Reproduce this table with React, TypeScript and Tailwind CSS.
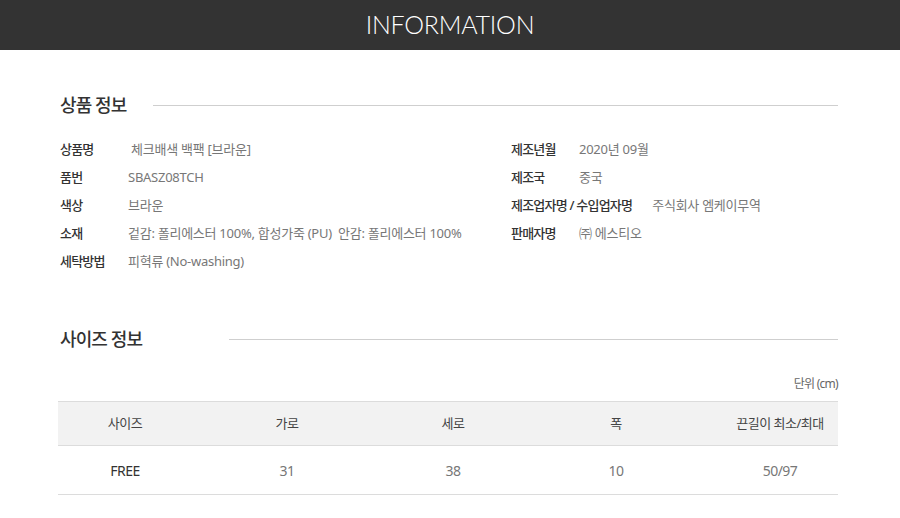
const font = { fontFamily: '"Noto Sans", "Noto Sans CJK KR", sans-serif' };

const productLeft = [
  { label: "상품명", value: " 체크배색 백팩 [브라운]" },
  { label: "품번", value: "SBASZ08TCH" },
  { label: "색상", value: "브라운" },
  { label: "소재", value: "겉감: 폴리에스터 100%, 합성가죽 (PU)  안감: 폴리에스터 100%" },
  { label: "세탁방법", value: "피혁류 (No-washing)" },
];

const productRight = [
  { label: "제조년월", value: "2020년 09월" },
  { label: "제조국", value: "중국" },
  { label: "제조업자명 / 수입업자명", value: "주식회사 엠케이무역" },
  { label: "판매자명", value: "㈜ 에스티오" },
];

const sizeHead = ["사이즈", "가로", "세로", "폭", "끈길이 최소/최대"];
const sizeRow = ["FREE", "31", "38", "10", "50/97"];
// nudges so each column's centre lands where the reference puts it
const colPad = ["pr-[22px]", "pr-[10px]", "pl-[10px]", "pl-[24px]", "pl-[40px]"];

function InfoRow({ label, value }: { label: string; value: string }) {
  return (
    <div className="flex h-[28px] items-center text-[13px] whitespace-pre">
      <span className="min-w-[68px] pr-[20px] font-medium tracking-[-0.06em] text-[#333]">{label}</span>
      <span className="tracking-[-0.02em] text-[#777]">{value}</span>
    </div>
  );
}

function SectionTitle({ title, lineWidth }: { title: string; lineWidth: string }) {
  return (
    <div className="flex items-center justify-between">
      <h2 className="text-[18px] font-medium tracking-[-0.05em] text-[#333]">{title}</h2>
      <div className={`h-px bg-[#cfcfcf] ${lineWidth}`} />
    </div>
  );
}

export default function App() {
  return (
    <div className="w-[900px] h-[518px] bg-white overflow-hidden" style={font}>
      <header className="h-[50px] bg-[#333333] flex items-center justify-center">
        <h1
          className="text-white text-[25px] font-light tracking-[-0.01em]"
          style={{ fontFamily: 'Lato, "Noto Sans", sans-serif' }}
        >
          INFORMATION
        </h1>
      </header>

      <div className="px-[60px] pr-[62px]">
        <section className="pt-[42px]">
          <SectionTitle title="상품 정보" lineWidth="w-[685px]" />
          <div className="mt-[17px] grid grid-cols-[451px_1fr]">
            <div className="flex flex-col">
              {productLeft.map((r) => (
                <InfoRow key={r.label} {...r} />
              ))}
            </div>
            <div className="flex flex-col">
              {productRight.map((r) => (
                <InfoRow key={r.label} {...r} />
              ))}
            </div>
          </div>
        </section>

        <section className="pt-[50px]">
          <SectionTitle title="사이즈 정보" lineWidth="w-[609px]" />
          <p className="mt-[22px] text-right text-[12px] tracking-[-0.06em] text-[#666]">단위 (cm)</p>
          <div className="mt-[8px] -ml-[2px]">
            <div className="grid grid-cols-5 h-[45px] items-center bg-[#f2f2f2] border-y border-[#dcdcdc] text-[13px] tracking-[-0.04em] text-[#444]">
              {sizeHead.map((h, i) => (
                <div key={h} className={`text-center ${colPad[i]}`}>
                  {h}
                </div>
              ))}
            </div>
            <div className="grid grid-cols-5 h-[49px] items-center border-b border-[#dcdcdc] text-[14px] tracking-[-0.04em]">
              {sizeRow.map((v, i) => (
                <div key={i} className={`text-center ${colPad[i]} ${i === 0 ? "text-[#333]" : "text-[#777]"}`}>
                  {v}
                </div>
              ))}
            </div>
          </div>
        </section>
      </div>
    </div>
  );
}
